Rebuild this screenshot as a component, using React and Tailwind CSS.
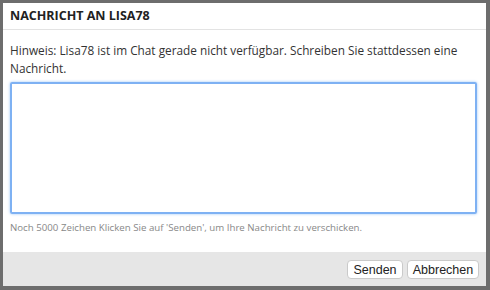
export default function App() {
  return (
    <div className="w-[490px] h-[290px] bg-[#6d6d6d] pt-[3px] pl-[3px] pr-[4px] pb-[4px]">
      <div className="flex h-full flex-col bg-white font-['Open_Sans',sans-serif] text-[#333]">
        <div className="flex h-[27px] items-center border-b border-[#e3e3e3] pl-[7px]">
          <h1 className="text-[12.5px] font-bold text-[#222]">NACHRICHT AN LISA78</h1>
        </div>
        <div className="flex flex-1 flex-col px-[7px] pt-[11px]">
          <p className="text-[11.8px] leading-[18px]">
            Hinweis: Lisa78 ist im Chat gerade nicht verfügbar. Schreiben Sie stattdessen eine Nachricht.
          </p>
          <textarea className="mt-[5px] h-[132px] w-[467px] resize-none rounded-[2px] border-2 border-[#7eb1f3] shadow-[0_0_3px_#9cc5f7] outline-none" />
          <p className="mt-[7px] text-[9.7px] text-[#888]">
            Noch 5000 Zeichen Klicken Sie auf 'Senden', um Ihre Nachricht zu verschicken.
          </p>
        </div>
        <div className="flex h-[34px] items-center justify-end gap-[4px] bg-[#e6e6e6] pr-[7px]">
          <button className="h-[19px] w-[56px] rounded-[4px] border border-[#cacaca] bg-white font-['Liberation_Sans',sans-serif] text-[12.5px] text-[#222]">
            Senden
          </button>
          <button className="h-[19px] w-[72px] rounded-[4px] border border-[#cacaca] bg-white font-['Liberation_Sans',sans-serif] text-[12.5px] text-[#222]">
            Abbrechen
          </button>
        </div>
      </div>
    </div>
  );
}
